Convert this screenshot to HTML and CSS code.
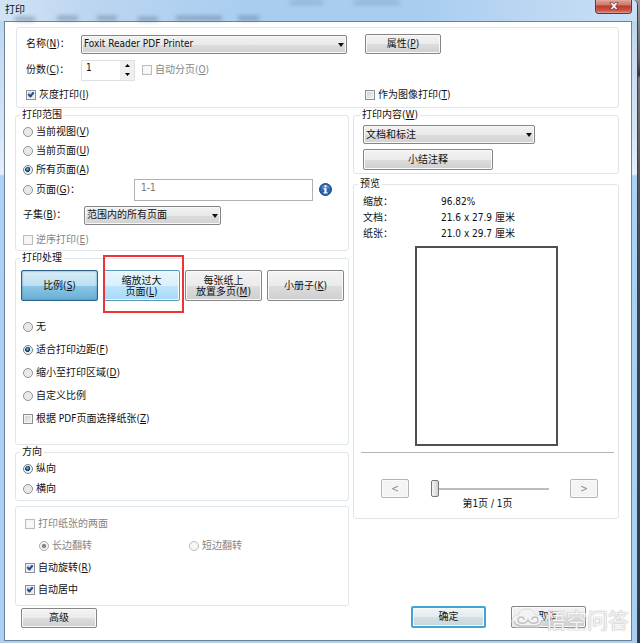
FILE: index.html
```html
<!DOCTYPE html>
<html lang="zh-CN">
<head>
<meta charset="utf-8">
<title>打印</title>
<meta name="viewport" content="width=device-width, initial-scale=1">
<link rel="stylesheet" href="styles.css">
</head>
<body>
<main class="window">
  <header class="titlebar">
    <svg class="glass" aria-hidden="true" width="420" height="21" viewBox="0 0 420 21">
      <g fill="#53697f"><path d="M11 17h20v4H11zM53 16h21v4H53zM93 16h20v4H93zM134 17h20v4h-20zM172 16h46v4h-46zM234 16h21v4h-21z"/></g>
      <g fill="#819fbb"><path d="M286 0h33v5h-33zM350 0h46v5h-46z"/></g>
    </svg>
    <h1 class="title">打印</h1>
    <button class="close" aria-label="关闭"><svg width="10" height="8" viewBox="0 0 12 9"><path d="M1 .5h3.2L6 2.4 7.8.5H11L7.8 4.5 11 8.5H7.8L6 6.6 4.2 8.5H1l3.2-4z" fill="#fff" stroke="#57353b" stroke-width=".8"/></svg></button>
  </header>
  <form class="client">
    <section class="panel printer">
      <label for="printer">名称(<u>N</u>)：</label>
      <span class="select"><select id="printer"><option>Foxit Reader PDF Printer</option></select></span>
      <button type="button" class="btn props">属性(<u>P</u>)</button>
      <label for="copies">份数(<u>C</u>)：</label>
      <div class="copies">
        <span class="spin"><input id="copies" type="text" value="1"><span class="arrows"><button type="button" aria-label="增加"><svg width="5" height="3" viewBox="0 0 5 3"><path d="M0 3 2.5 0 5 3z"/></svg></button><button type="button" aria-label="减少"><svg width="5" height="3" viewBox="0 0 5 3"><path d="M0 0 2.5 3 5 0z"/></svg></button></span></span>
        <label class="opt off"><input type="checkbox" disabled><span>自动分页(<u>O</u>)</span></label>
      </div>
      <label class="opt gray"><input type="checkbox" checked><span>灰度打印(<u>I</u>)</span></label>
      <label class="opt image"><input type="checkbox"><span>作为图像打印(<u>T</u>)</span></label>
    </section>
    <div class="columns">
      <div class="left">
        <fieldset class="range">
          <legend>打印范围</legend>
          <label class="opt"><input type="radio" name="range"><span>当前视图(<u>V</u>)</span></label>
          <label class="opt"><input type="radio" name="range"><span>当前页面(<u>U</u>)</span></label>
          <label class="opt"><input type="radio" name="range" checked><span>所有页面(<u>A</u>)</span></label>
          <div class="pages">
            <label class="opt"><input type="radio" name="range"><span>页面(<u>G</u>)：</span></label>
            <input class="pagebox" type="text" value="1-1" aria-label="页面范围">
            <svg class="info" width="13" height="13" viewBox="0 0 13 13"><circle cx="6.5" cy="6.5" r="6" fill="#2d62ae" stroke="#194583"/><path d="M2 5a4.7 4.7 0 0 1 9 0q-4 2-9 0" fill="#6e9bd7" opacity=".6"/><path d="M5.5 2.3h2v2h-2zM4.5 5.3h3v4h1v1.2h-4V9.3h1V6.5h-1z" fill="#fff"/></svg>
          </div>
          <div class="subset">
            <label for="subset">子集(<u>B</u>)：</label>
            <span class="select"><select id="subset"><option>范围内的所有页面</option></select></span>
          </div>
          <label class="opt off"><input type="checkbox" disabled><span>逆序打印(<u>E</u>)</span></label>
        </fieldset>
        <fieldset class="handling">
          <legend>打印处理</legend>
          <div class="modes">
            <button type="button" class="btn chosen">比例(<u>S</u>)</button>
            <div class="marked"><button type="button" class="btn hover">缩放过大<br>页面(<u>L</u>)</button></div>
            <button type="button" class="btn">每张纸上<br>放置多页(<u>M</u>)</button>
            <button type="button" class="btn">小册子(<u>K</u>)</button>
          </div>
          <label class="opt"><input type="radio" name="scale"><span>无</span></label>
          <label class="opt"><input type="radio" name="scale" checked><span>适合打印边距(<u>F</u>)</span></label>
          <label class="opt"><input type="radio" name="scale"><span>缩小至打印区域(<u>D</u>)</span></label>
          <label class="opt"><input type="radio" name="scale"><span>自定义比例</span></label>
          <label class="opt"><input type="checkbox"><span>根据 PDF页面选择纸张(<u>Z</u>)</span></label>
        </fieldset>
        <fieldset class="orient">
          <legend>方向</legend>
          <label class="opt"><input type="radio" name="orient" checked><span>纵向</span></label>
          <label class="opt"><input type="radio" name="orient"><span>横向</span></label>
        </fieldset>
        <section class="panel duplex">
          <label class="opt off"><input type="checkbox" disabled><span>打印纸张的两面</span></label>
          <div class="flip">
            <label class="opt off"><input type="radio" name="flip" checked disabled><span>长边翻转</span></label>
            <label class="opt off"><input type="radio" name="flip" disabled><span>短边翻转</span></label>
          </div>
          <label class="opt"><input type="checkbox" checked><span>自动旋转(<u>R</u>)</span></label>
          <label class="opt"><input type="checkbox" checked><span>自动居中</span></label>
        </section>
        <button type="button" class="btn advanced">高级</button>
      </div>
      <div class="right">
        <fieldset class="content">
          <legend><label for="what">打印内容(<u>W</u>)</label></legend>
          <span class="select"><select id="what"><option>文档和标注</option></select></span>
          <button type="button" class="btn">小结注释</button>
        </fieldset>
        <fieldset class="preview">
          <legend>预览</legend>
          <dl class="facts">
            <dt>缩放：</dt><dd>96.82%</dd>
            <dt>文档：</dt><dd>21.6 x 27.9 厘米</dd>
            <dt>纸张：</dt><dd>21.0 x 29.7 厘米</dd>
          </dl>
          <div class="sheet"></div>
          <hr>
          <div class="pager">
            <button type="button" class="btn" disabled>&lt;</button>
            <input type="range" min="1" max="2" value="1" aria-label="页码">
            <button type="button" class="btn" disabled>&gt;</button>
          </div>
          <p class="pageno">第1页 / 1页</p>
        </fieldset>
        <div class="actions">
          <button type="button" class="btn primary">确定</button>
          <div class="cancel">
            <button type="button" class="btn">取消</button>
            <div class="watermark">
              <svg width="34" height="22" viewBox="0 0 34 22"><path d="M5 19a6 6 0 0 1-3-9Q4 6 8 7q0-6 8-6 7 0 8 6 6-1 8 4 1 5-4 8z" fill="#f3f3f3" stroke="#ddd"/><path d="M13 12a3 3 0 1 0-3 3q5 1 7-3 2 4 7 3a3 3 0 1 0-3-3M3 13q1 5 8 5h13q6 0 7-6" fill="none" stroke="#c3c3c3" stroke-width="1.5"/></svg>
              <span>悟空问答</span>
            </div>
          </div>
        </div>
      </div>
    </div>
  </form>
</main>
</body>
</html>
```
FILE: styles.css
```css
* { box-sizing: border-box; }

body {
  margin: 0;
  min-height: 100vh;
  display: flex;
  padding-right: 2px;
  background: linear-gradient(#9a9a9a, #655e60 60px, #333 75px, #777 78px, #555 180px, #3c4552 300px, #2f3b4a);
  font: 10px/12px "DejaVu Sans Condensed", "Noto Sans CJK SC", sans-serif;
  color: #111;
}

button, input, select { font: inherit; color: inherit; margin: 0; }
label { white-space: nowrap; }

.window {
  flex: 1;
  display: flex;
  flex-direction: column;
  padding: 0 5px 2px 4px;
  border-right: 1px solid #34404c;
  border-top-right-radius: 5px;
  background: linear-gradient(#b7d2ee, #c6dcf2 60px, #d4e4f5 130px, #e6effa 174px, #a9d2f5 176px, #a9d0f3);
}

.titlebar {
  position: relative;
  display: flex;
  justify-content: space-between;
  align-items: flex-start;
  height: 21px;
  margin: 0 -5px 0 -4px;
  padding: 0 5px;
  border-top-right-radius: 5px;
  background: linear-gradient(90deg, #d2e3f5, #bcd5f0 14%, #a8cdf1 40%, #a8cdf1 66%, #bad6f2 82%, #c9dff5);
}
.glass { position: absolute; left: 4px; top: 0; filter: blur(2px); opacity: .5; }
.title { position: relative; margin: 4px 0 0; font-size: 10px; line-height: 12px; font-weight: 400; }
.close {
  display: flex;
  justify-content: center;
  align-items: center;
  width: 37px;
  height: 14px;
  padding: 0 0 2px;
  border: 1px solid #63343d;
  border-top: 0;
  border-radius: 0 0 4px 4px;
  background: linear-gradient(#dda296, #cf7565 40%, #b83926 45%, #c9574a 80%, #dd8d7c);
  box-shadow: inset 0 0 1px #fff;
}

.client {
  flex: 1;
  display: flex;
  flex-direction: column;
  gap: 1px;
  padding: 5px 12px 12px 11px;
  border: 1px solid #6e8298;
  background: #fff;
}

.panel, fieldset {
  margin: 0;
  min-width: 0;
  border: 1px solid #dfe6ea;
  border-radius: 3px;
}
fieldset { padding: 1px 4px 1px 7px; display: flex; flex-direction: column; align-items: flex-start; }
legend { padding: 0 2px; margin-left: -3px; }

.printer {
  display: grid;
  grid-template-columns: 55px 266px 1fr;
  grid-template-rows: 26px 26px 24px;
  align-items: center;
  padding: 3px 9px 0;
}
.printer .select { width: 266px; }
.props { width: 76px; height: 20px; margin-left: 18px; }
.copies { grid-column: 2 / 4; display: flex; align-items: center; gap: 7px; }
.gray { grid-column: 1 / 3; }
.image { margin-left: 18px; }

.spin { display: flex; width: 54px; height: 21px; border: 1px solid #dde1e5; }
.spin input { flex: 1; min-width: 0; border: 0; padding: 0 4px 4px; background: none; outline: 0; }
.arrows { display: flex; flex-direction: column; width: 14px; }
.arrows button { flex: 1; display: flex; justify-content: center; align-items: center; padding: 0; border: 0; background: #f0f0f0; }

.select { position: relative; display: flex; height: 19px; }
.select select {
  width: 100%;
  appearance: none;
  padding: 0 2px;
  border: 1px solid #858585;
  border-radius: 2px;
  background: linear-gradient(#f2f2f2, #e9e9e9 50%, #dcdcdc 51%, #d2d2d2);
  box-shadow: inset 0 0 0 1px #f8f8f8;
}
.select::after {
  content: "";
  position: absolute;
  right: 3px;
  top: 8px;
  border: 3px solid transparent;
  border-top: 4px solid #111;
  border-bottom: 0;
}

.btn {
  padding: 0;
  border: 1px solid #858585;
  border-radius: 2px;
  background: linear-gradient(#f3f3f3, #ebebeb 50%, #dddddd 51%, #cfcfcf);
  box-shadow: inset 0 0 0 1px #fafafa;
}

.opt { display: flex; align-items: center; gap: 3px; }
.opt input { appearance: none; flex: none; width: 10px; height: 10px; border: 1px solid #8b9095; }
.opt [type="checkbox"] { background: linear-gradient(135deg, #c9cdd1, #f5f5f5); box-shadow: inset 0 0 0 1px #f4f4f4; }
.opt [type="radio"] { border-radius: 50%; background: radial-gradient(#f1f1f1, #cfd3d6); box-shadow: inset 0 0 0 1px #f4f4f4; }
.opt [type="radio"]:checked { border-color: #71808e; background: radial-gradient(circle at 45% 40%, #7ed0ee, #174b75 28%, #123a5e 38%, #dce5ec 45%); }
.opt [type="checkbox"]:checked { position: relative; background: linear-gradient(135deg, #bcc9dc, #edf2f8); }
.opt [type="checkbox"]:checked::after {
  content: "";
  position: absolute;
  left: 2px;
  top: 0;
  width: 2px;
  height: 4px;
  border: solid #28488d;
  border-width: 0 2px 2px 0;
  transform: rotate(40deg);
}
.opt.off { color: #858585; }
.opt.off input { border-color: #bcbcbc; background: #f8f8f8; }
.opt.off [type="radio"]:checked { border-color: #aaa; background: radial-gradient(#888 30%, #eee 45%); }

.columns {
  flex: 1;
  display: grid;
  grid-template-columns: 334fr 266fr;
  gap: 4px;
  margin-left: -1px;
}
.left, .right { display: flex; flex-direction: column; gap: 1px; min-width: 0; }

.range .opt { height: 19px; }
.pages { display: flex; align-items: center; width: 100%; height: 21px; }
.pages .opt { width: 111px; }
.pagebox { width: 179px; height: 22px; padding: 0 6px 4px; border: 1px solid #adb2b6; color: #777; }
.info { margin-left: 6px; }
.subset { display: flex; align-items: center; height: 30px; }
.subset label { width: 61px; }
.subset .select { width: 137px; }

.handling .opt { height: 23px; }
.modes { display: grid; grid-template-columns: repeat(4, 1fr); gap: 5px; align-self: stretch; height: 31px; margin: 5px 0 14px -2px; }
.modes .btn { width: 100%; height: 31px; line-height: 11px; white-space: nowrap; }
.modes .chosen { border-color: #2c628b; background: linear-gradient(#d9edf8, #bbdff2 50%, #8cc7e6 51%, #67afd4); box-shadow: inset 0 0 2px #3f7ea5; }
.modes .hover { border-color: #5798bf; background: linear-gradient(#e9f6fd, #d9f0fc 50%, #bee6fd 51%, #a7d9f5); }
.marked { position: relative; }
.marked::after { content: ""; position: absolute; inset: -15px -4px -12px 0; border: 2px solid #ee3338; pointer-events: none; }
.handling { padding-bottom: 14px; }

.orient .opt { height: 20px; }
.duplex { margin-top: 4px; padding: 6px 9px 4px; }
.duplex .opt { height: 22px; }
.flip { display: grid; grid-template-columns: 150px 1fr; padding-left: 14px; }
.advanced { width: 76px; height: 20px; margin: 1px 0 0 6px; }

.content { padding: 1px 9px 3px; gap: 5px; }
.content .select { width: 172px; margin-top: 3px; }
.content .btn { width: 130px; height: 21px; }
.right { gap: 4px; }

.preview { padding: 4px 4px 8px 7px; align-items: stretch; }
.facts { display: grid; grid-template-columns: 78px 1fr; grid-auto-rows: 16px; align-items: center; margin: 0 0 4px 2px; }
.facts dd { margin: 0; }
.sheet { align-self: center; width: 143px; height: 200px; border: 2px solid #505050; margin-right: 3px; }
.preview hr { width: 100%; margin: 6px 0 26px; border: 0; border-top: 1px solid #b5b5b5; }
.pager { display: flex; justify-content: space-between; align-items: center; padding: 0 16px 0 20px; }
.pager .btn { width: 28px; height: 19px; border-color: #b5b5b5; background: #f4f4f4; color: #888; }
.pager input { appearance: none; width: 118px; height: 18px; background: none; }
.pager input::-webkit-slider-runnable-track { height: 2px; background: #bdbdbd; }
.pager input::-webkit-slider-thumb { appearance: none; width: 8px; height: 17px; margin-top: -8px; border: 1px solid #777; border-radius: 2px; background: linear-gradient(90deg, #f5f5f5, #d0d0d0); }
.pageno { margin: 0; text-align: center; }

.actions { display: flex; justify-content: flex-end; gap: 25px; margin-top: auto; padding-right: 33px; }
.actions .btn { display: block; width: 75px; height: 22px; }
.actions .primary { border: 2px solid #41a5d4; background: linear-gradient(#f0f5f8, #e4ecf0 50%, #d4dfe5 51%, #cad7de); }
.cancel { position: relative; }
.watermark { position: absolute; left: 0; top: 2px; display: flex; align-items: center; color: #f4f4f4; font: 21px/22px "Noto Sans CJK SC", sans-serif; white-space: nowrap; text-shadow: 0 0 1px #aaa, 0 0 2px #ccc; pointer-events: none; }
```
